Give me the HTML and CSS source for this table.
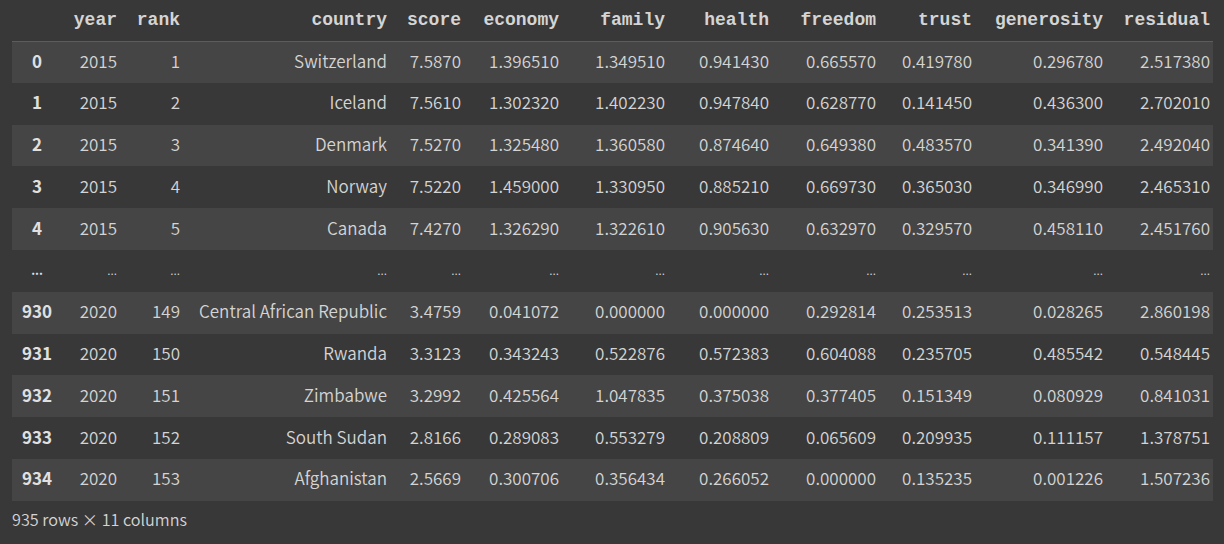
FILE: index.html
```html
<!DOCTYPE html>
<html>
<head>
<meta charset="utf-8">
<link rel="stylesheet" href="styles.css">
</head>
<body>
<div class="output">
<table class="dataframe">
<colgroup>
<col class="c-idx"><col class="c-year"><col class="c-rank"><col class="c-country"><col class="c-score"><col class="c-economy"><col class="c-family"><col class="c-health"><col class="c-freedom"><col class="c-trust"><col class="c-gen"><col class="c-res">
</colgroup>
<thead>
<tr><th class="idx"></th><th>year</th><th>rank</th><th>country</th><th>score</th><th>economy</th><th>family</th><th>health</th><th>freedom</th><th>trust</th><th>generosity</th><th>residual</th></tr>
</thead>
<tbody>
<tr><th class="idx">0</th><td>2015</td><td>1</td><td>Switzerland</td><td>7.5870</td><td>1.396510</td><td>1.349510</td><td>0.941430</td><td>0.665570</td><td>0.419780</td><td>0.296780</td><td>2.517380</td></tr>
<tr><th class="idx">1</th><td>2015</td><td>2</td><td>Iceland</td><td>7.5610</td><td>1.302320</td><td>1.402230</td><td>0.947840</td><td>0.628770</td><td>0.141450</td><td>0.436300</td><td>2.702010</td></tr>
<tr><th class="idx">2</th><td>2015</td><td>3</td><td>Denmark</td><td>7.5270</td><td>1.325480</td><td>1.360580</td><td>0.874640</td><td>0.649380</td><td>0.483570</td><td>0.341390</td><td>2.492040</td></tr>
<tr><th class="idx">3</th><td>2015</td><td>4</td><td>Norway</td><td>7.5220</td><td>1.459000</td><td>1.330950</td><td>0.885210</td><td>0.669730</td><td>0.365030</td><td>0.346990</td><td>2.465310</td></tr>
<tr><th class="idx">4</th><td>2015</td><td>5</td><td>Canada</td><td>7.4270</td><td>1.326290</td><td>1.322610</td><td>0.905630</td><td>0.632970</td><td>0.329570</td><td>0.458110</td><td>2.451760</td></tr>
<tr class="ell"><th class="idx">...</th><td>...</td><td>...</td><td>...</td><td>...</td><td>...</td><td>...</td><td>...</td><td>...</td><td>...</td><td>...</td><td>...</td></tr>
<tr><th class="idx">930</th><td>2020</td><td>149</td><td>Central African Republic</td><td>3.4759</td><td>0.041072</td><td>0.000000</td><td>0.000000</td><td>0.292814</td><td>0.253513</td><td>0.028265</td><td>2.860198</td></tr>
<tr><th class="idx">931</th><td>2020</td><td>150</td><td>Rwanda</td><td>3.3123</td><td>0.343243</td><td>0.522876</td><td>0.572383</td><td>0.604088</td><td>0.235705</td><td>0.485542</td><td>0.548445</td></tr>
<tr><th class="idx">932</th><td>2020</td><td>151</td><td>Zimbabwe</td><td>3.2992</td><td>0.425564</td><td>1.047835</td><td>0.375038</td><td>0.377405</td><td>0.151349</td><td>0.080929</td><td>0.841031</td></tr>
<tr><th class="idx">933</th><td>2020</td><td>152</td><td>South Sudan</td><td>2.8166</td><td>0.289083</td><td>0.553279</td><td>0.208809</td><td>0.065609</td><td>0.209935</td><td>0.111157</td><td>1.378751</td></tr>
<tr><th class="idx">934</th><td>2020</td><td>153</td><td>Afghanistan</td><td>2.5669</td><td>0.300706</td><td>0.356434</td><td>0.266052</td><td>0.000000</td><td>0.135235</td><td>0.001226</td><td>1.507236</td></tr>
</tbody>
</table>
<p class="shape">935 rows × 11 columns</p>
</div>
</body>
</html>
```

FILE: styles.css
```css
html, body {
  margin: 0;
  padding: 0;
  background: #383838;
}
body {
  font-family: "Noto Sans CJK KR", "Noto Sans", sans-serif;
  color: #d4d4d4;
}
.output {
  padding: 0 0 0 12px;
}
.dataframe {
  border-collapse: collapse;
  table-layout: fixed;
  width: 1201px;
  font-size: 17px;
  font-weight: 350;
}
.c-idx { width: 50px; }
.c-year { width: 58px; }
.c-rank { width: 63px; }
.c-country { width: 207px; }
.c-score { width: 74px; }
.c-economy { width: 98px; }
.c-family { width: 106px; }
.c-health { width: 104px; }
.c-freedom { width: 107px; }
.c-trust { width: 96px; }
.c-gen { width: 131px; }
.c-res { width: 107px; }

.dataframe thead th {
  height: 41px;
  box-sizing: border-box;
  padding: 0 3px 1px 0;
  text-align: right;
  font-family: "Liberation Mono", monospace;
  font-weight: bold;
  font-size: 18px;
  color: #d4d4d4;
  border-bottom: 1px solid #5c5c5c;
  white-space: nowrap;
}
.dataframe tbody td,
.dataframe tbody th {
  height: 41.8px;
  padding: 0 3px 4px 0;
  box-sizing: border-box;
  text-align: right;
  white-space: nowrap;
  line-height: 1;
}
.dataframe tbody th.idx {
  text-align: center;
  padding-right: 0;
  font-weight: bold;
  color: #e0e0e0;
}
.dataframe tbody tr:nth-child(odd) {
  background: #454545;
}
.dataframe tbody tr.ell {
  background: transparent;
  font-size: 12px;
}
.dataframe tbody tr.ell td,
.dataframe tbody tr.ell th {
  padding-bottom: 2px;
}
.shape {
  margin: 6px 0 0 0;
  font-size: 16.2px;
  font-weight: 350;
  line-height: 24px;
  color: #d4d4d4;
}
```
